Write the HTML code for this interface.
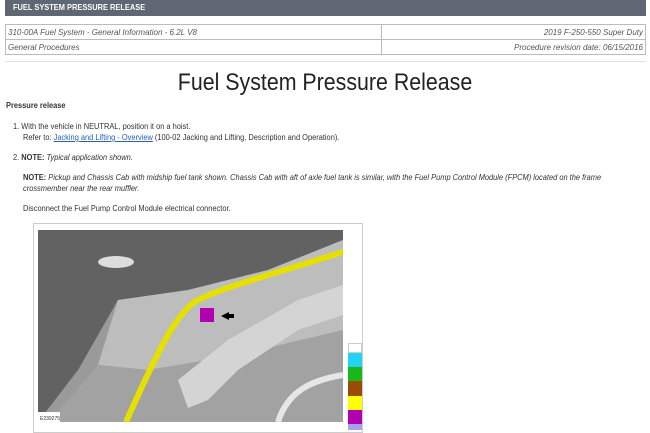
<!DOCTYPE html>
<html><head><meta charset="utf-8"><style>
*{margin:0;padding:0;box-sizing:border-box}
body{width:650px;height:430px;overflow:hidden;background:#fff;font-family:"Liberation Sans Narrow","Liberation Sans",sans-serif;color:#333;font-size:8px;position:relative}
.a{position:absolute;white-space:nowrap}
.t{transform:scaleX(0.93);transform-origin:0 0}
.bar{left:5px;top:0;width:641px;height:16px;background:#5f6772}
table{position:absolute;left:5px;top:24px;width:641px;border-collapse:collapse;font-style:italic;font-size:8px;color:#555}
td{border:1px solid #bbb;height:15px;padding:0 2px}
td.r{text-align:right}
.hr{left:5px;top:61px;width:641px;height:1px;background:#e3e3e3}
h1{position:absolute;left:0;width:650px;top:69px;text-align:center;font-family:"Liberation Sans",sans-serif;font-weight:normal;font-size:24px;color:#222;transform:scaleX(0.89);transform-origin:325px 0}
a{color:#2a62b0}
</style></head><body>
<div class="a bar"></div>
<div class="a t" style="left:13px;top:3px;color:#fff;font-weight:bold">FUEL SYSTEM PRESSURE RELEASE</div>
<table><tr><td style="width:376px">310-00A Fuel System - General Information - 6.2L V8</td><td class="r">2019 F-250-550 Super Duty</td></tr>
<tr><td>General Procedures</td><td class="r">Procedure revision date: 06/15/2016</td></tr></table>
<div class="a hr"></div>
<h1>Fuel System Pressure Release</h1>
<div class="a t" style="left:6px;top:101px;font-weight:bold">Pressure release</div>
<div class="a t" style="left:13px;top:122px">1. With the vehicle in NEUTRAL, position it on a hoist.</div>
<div class="a t" style="left:23px;top:133px">Refer to: <a href="#">Jacking and Lifting - Overview</a> (100-02 Jacking and Lifting, Description and Operation).</div>
<div class="a t" style="left:13px;top:153px">2. <b>NOTE:</b> <i>Typical application shown.</i></div>
<div class="a t" style="left:23px;top:173px"><b>NOTE:</b> <i>Pickup and Chassis Cab with midship fuel tank shown. Chassis Cab with aft of axle fuel tank is similar, with the Fuel Pump Control Module (FPCM) located on the frame</i></div>
<div class="a t" style="left:23px;top:184px"><i>crossmember near the rear muffler.</i></div>
<div class="a t" style="left:23px;top:204px">Disconnect the Fuel Pump Control Module electrical connector.</div>
<div class="a" style="left:33px;top:223px;width:330px;height:210px;border:1px solid #ccc"></div>
<svg class="a" style="left:38px;top:230px" width="305" height="192" viewBox="0 0 305 192">
<rect width="305" height="192" fill="#9a9a9a"/>
<polygon points="0,0 305,0 305,10 230,40 150,60 80,70 40,140 0,192" fill="#626262"/>
<polygon points="80,70 150,60 230,40 305,10 305,100 200,125 110,140 60,135" fill="#bdbdbd"/>
<polygon points="60,135 110,140 200,125 305,100 305,192 10,192 30,170" fill="#a2a2a2"/>
<polygon points="140,150 190,110 260,70 305,55 305,85 260,100 200,140 170,170 150,178" fill="#d4d4d4"/>
<path d="M240,192 C250,160 275,150 305,145" stroke="#e6e6e6" stroke-width="6" fill="none"/>
<ellipse cx="78" cy="32" rx="18" ry="6" fill="#ddd"/>
<path d="M88,192 C120,120 140,80 160,70 C190,55 250,40 305,22" stroke="#e6e000" stroke-width="6" fill="none"/>
<rect x="162" y="78" width="14" height="14" fill="#b000b0"/>
<path d="M183,86 l8,-4 v8 z M188,84 h8 v4 h-8 z" fill="#000"/>
<rect x="0" y="182" width="22" height="10" fill="#fff"/>
<text x="2" y="190" font-size="5" fill="#333" font-family="Liberation Sans">E239275</text>
</svg>
<div class="a" style="left:348px;top:343px;width:14px;height:87px">
<div style="height:10px;background:#fff;border:1px solid #ccc"></div>
<div style="height:14px;background:#22d4f2"></div>
<div style="height:14px;background:#18b818"></div>
<div style="height:15px;background:#994c06"></div>
<div style="height:14px;background:#ffff00"></div>
<div style="height:14px;background:#b000b0"></div>
<div style="height:6px;background:#a6a0ee"></div>
</div>
</body></html>
